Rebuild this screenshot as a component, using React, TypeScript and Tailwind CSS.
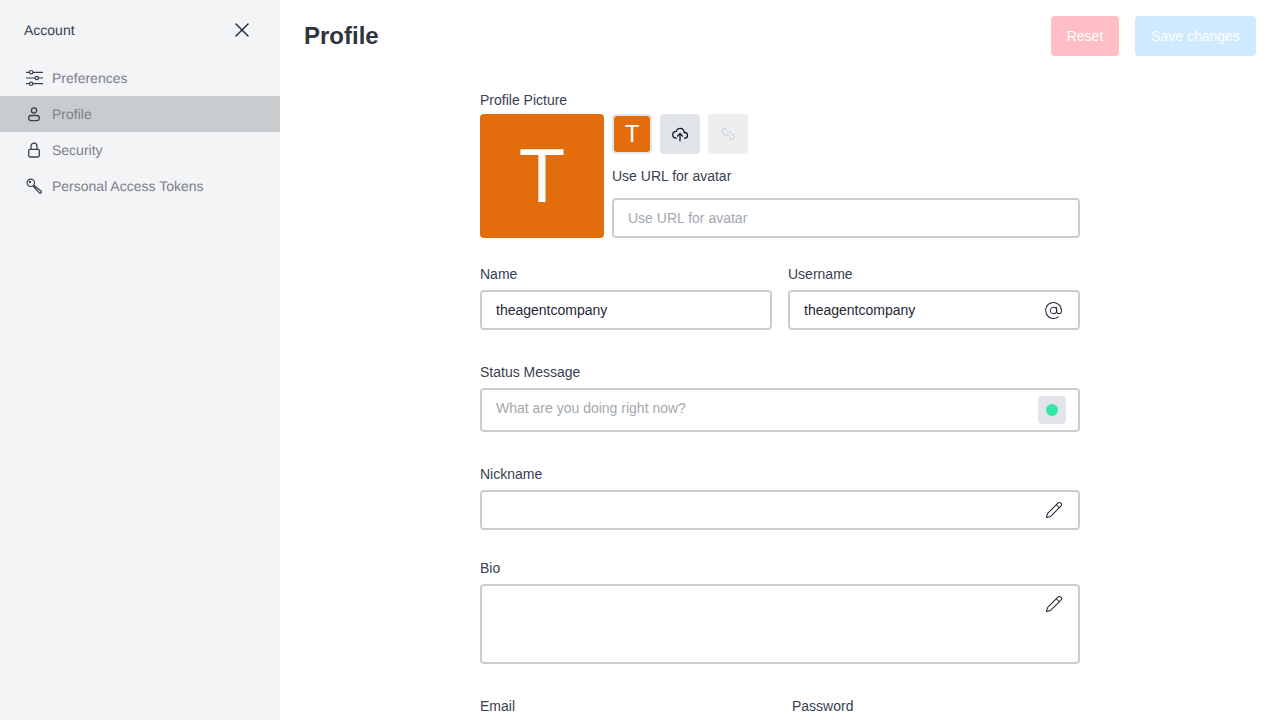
import React from "react";
import { AtSign, Pencil, X } from "lucide-react";

const SlidersIcon = () => (
  <svg width="18" height="18" viewBox="0 0 18 18" fill="none" stroke="currentColor" strokeWidth="1.2">
    <path d="M1 3.4h3.6M7.800 3.4H18M1 9h9.200M13.400 9H18M1 14.600h3.600M7.800 14.600H18" />
    <circle cx="6.200" cy="3.200" r="1.700" />
    <circle cx="11.800" cy="9" r="1.700" />
    <circle cx="6.200" cy="14.800" r="1.700" />
  </svg>
);

const UserIcon = () => (
  <svg width="16" height="16" viewBox="0 0 16 16" fill="none" stroke="currentColor" strokeWidth="1.3">
    <circle cx="8" cy="4.400" r="2.600" />
    <rect x="2.700" y="9.500" width="10.600" height="5.200" rx="2.400" />
  </svg>
);

const LockIcon = () => (
  <svg width="16" height="16" viewBox="0 0 16 16" fill="none" stroke="currentColor" strokeWidth="1.3">
    <rect x="2.700" y="7.400" width="10.600" height="7.600" rx="1.400" />
    <path d="M5 7.400V4.200a3 3 0 0 1 6 0v3.200" />
  </svg>
);

const KeyIcon = () => (
  <svg width="18" height="18" viewBox="0 0 18 18" fill="none" stroke="currentColor" strokeWidth="1.2">
    <circle cx="5.800" cy="5.800" r="3.700" />
    <circle cx="5" cy="5" r="0.600" />
    <path d="M8.600 8.200l7.400 5.800c.6.600.4 1.600-.2 2-.5.300-1.100.200-1.500-.200L8 9" />
  </svg>
);

const CloudIcon = () => (
  <svg width="18" height="18" viewBox="0 0 24 24" fill="none" stroke="currentColor" strokeWidth="1.700" strokeLinecap="round" strokeLinejoin="round">
    <path d="M7 17.500a4.600 4.400 0 0 1 0-9a5 4.500 0 0 1 10.400 1.500h1.200a3.800 3.800 0 0 1 .4 7.500h-1" />
    <path d="M8.600 14.800l3.400-3.400l3.400 3.400M12 11.400V21" />
  </svg>
);

const ChainIcon = () => (
  <svg width="16" height="16" viewBox="0 0 16 16" fill="none" stroke="currentColor" strokeWidth="1.200" strokeLinecap="round">
    <path d="M6.600 4.200L5.400 3a2.400 2.400 0 0 0-3.200 3.400l2.800 2.800a2.400 2.400 0 0 0 3.400 0" />
    <path d="M9.400 11.800l1.200 1.200a2.400 2.400 0 0 0 3.200-3.400L11 6.800a2.400 2.400 0 0 0-3.400 0" />
  </svg>
);

const menu = [
  { label: "Preferences", icon: <SlidersIcon /> },
  { label: "Profile", icon: <UserIcon />, active: true },
  { label: "Security", icon: <LockIcon /> },
  { label: "Personal Access Tokens", icon: <KeyIcon /> },
];

const Field = ({ label, className = "", children }: { label: string; className?: string; children: React.ReactNode }) => (
  <div className={className}>
    <label className="block h-4 mb-2 text-sm leading-4 text-[#374151]">{label}</label>
    {children}
  </div>
);

const inputClass =
  "flex items-center h-10 px-[14px] border-2 border-[#cbced1] rounded bg-white text-sm text-[#1f2937]";

export default function App() {
  return (
    <div className="flex h-screen overflow-hidden bg-white antialiased font-['Liberation_Sans',Arial,sans-serif]">
      <aside className="w-[280px] shrink-0 bg-[#f3f4f6] [text-rendering:geometricPrecision]">
        <div className="flex items-center justify-between h-[60px] pl-6 pr-[26px]">
          <span className="text-sm text-[#374151]">Account</span>
          <X size={24} strokeWidth={1.4} className="text-[#1f2937]" />
        </div>
        <nav>
          {menu.map((item) => (
            <div
              key={item.label}
              className={`flex items-center h-9 pl-6 text-sm text-[#7b808a] ${item.active ? "bg-[#c9cccf]" : ""}`}
            >
              <span className="flex items-center justify-center w-5 h-5 mr-2 text-[#374151]">{item.icon}</span>
              {item.label}
            </div>
          ))}
        </nav>
      </aside>

      <main className="flex-1 min-w-0">
        <header className="flex items-center justify-between h-[72px] px-6">
          <h1 className="text-2xl font-bold text-[#2f343d]">Profile</h1>
          <div className="flex gap-4">
            <button className="h-10 w-[68px] rounded bg-[#ffbdc5] text-sm text-white">Reset</button>
            <button className="h-10 w-[121px] rounded bg-[#cfe9ff] text-sm text-white">Save changes</button>
          </div>
        </header>

        <div className="w-[600px] mx-auto pt-5">
          <div className="h-4 mb-[6px] text-sm leading-4 text-[#374151]">Profile Picture</div>
          <div className="flex gap-2">
            <div className="flex items-center justify-center w-[124px] h-[124px] rounded bg-[#e36d0c] text-white text-[76px] leading-none">
              T
            </div>
            <div className="flex-1">
              <div className="flex gap-2">
                <div className="flex items-center justify-center w-10 h-10 rounded border-2 border-[#e5e7eb]">
                  <div className="flex items-center justify-center w-9 h-9 rounded-[3px] bg-[#e36d0c] text-white text-2xl">T</div>
                </div>
                <div className="flex items-center justify-center w-10 h-10 rounded bg-[#e1e4e8] text-[#111827]">
                  <CloudIcon />
                </div>
                <div className="flex items-center justify-center w-10 h-10 rounded bg-[#eceef0] text-[#cfd3d8]">
                  <ChainIcon />
                </div>
              </div>
              <div className="h-4 mt-[14px] mb-[14px] text-sm leading-4 text-[#374151]">Use URL for avatar</div>
              <div className={`${inputClass} text-[#a3a8b0]`}>Use URL for avatar</div>
            </div>
          </div>

          <div className="grid grid-cols-2 gap-4 mt-7">
            <Field label="Name">
              <div className={inputClass}>theagentcompany</div>
            </Field>
            <Field label="Username">
              <div className={`${inputClass} justify-between`}>
                theagentcompany
                <AtSign size={19} strokeWidth={1.3} className="text-[#1f2937] mr-px" />
              </div>
            </Field>
          </div>

          <Field label="Status Message" className="mt-[34px]">
            <div className="flex items-start justify-between h-11 pl-[14px] pr-3 pt-2 border-2 border-[#cbced1] rounded text-sm text-[#a3a8b0]">
              What are you doing right now?
              <span className="flex items-center justify-center w-7 h-7 -mt-[2px] rounded bg-[#e1e4e8]">
                <span className="w-3 h-3 rounded-full bg-[#34e5a8]" />
              </span>
            </div>
          </Field>

          <Field label="Nickname" className="mt-[34px]">
            <div className={`${inputClass} justify-end`}>
              <Pencil size={18} strokeWidth={1.4} className="text-[#1f2937] mr-px" />
            </div>
          </Field>

          <Field label="Bio" className="mt-[30px]">
            <div className="flex justify-end h-20 pt-[9px] px-[14px] border-2 border-[#cbced1] rounded">
              <Pencil size={18} strokeWidth={1.4} className="text-[#1f2937] mr-px" />
            </div>
          </Field>

          <div className="grid grid-cols-2 gap-6 mt-[34px]">
            <Field label="Email">
              <div className={inputClass} />
            </Field>
            <Field label="Password">
              <div className={inputClass} />
            </Field>
          </div>
        </div>
      </main>
    </div>
  );
}
